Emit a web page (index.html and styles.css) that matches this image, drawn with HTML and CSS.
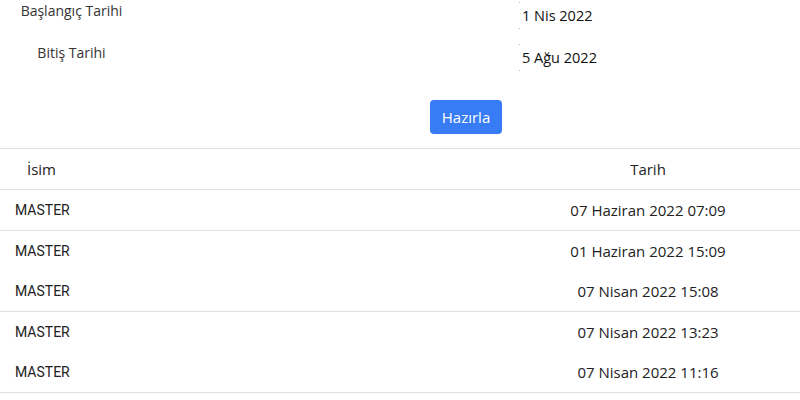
FILE: index.html
```html
<!DOCTYPE html>
<html lang="tr">
<head>
<meta charset="utf-8">
<link rel="stylesheet" href="styles.css">
</head>
<body>
<div class="form">
  <div class="field">
    <div class="label">Başlangıç Tarihi</div>
    <div class="value">1 Nis 2022</div>
  </div>
  <div class="field">
    <div class="label">Bitiş Tarihi</div>
    <div class="value">5 Ağu 2022</div>
  </div>
</div>
<div class="actions"><button class="btn">Hazırla</button></div>
<table class="grid">
  <thead>
    <tr><th class="c-name">İsim</th><th class="c-date">Tarih</th></tr>
  </thead>
  <tbody>
    <tr class="line"><td class="c-name">MASTER</td><td class="c-date">07 Haziran 2022 07:09</td></tr>
    <tr><td class="c-name">MASTER</td><td class="c-date">01 Haziran 2022 15:09</td></tr>
    <tr class="line"><td class="c-name">MASTER</td><td class="c-date">07 Nisan 2022 15:08</td></tr>
    <tr><td class="c-name">MASTER</td><td class="c-date">07 Nisan 2022 13:23</td></tr>
    <tr class="line"><td class="c-name">MASTER</td><td class="c-date">07 Nisan 2022 11:16</td></tr>
  </tbody>
</table>
</body>
</html>
```
FILE: styles.css
```css
html, body { margin: 0; padding: 0; background: #fff; }
body { font-family: "Open Sans", "Noto Sans", sans-serif; color: #212529; width: 800px; }
.form { display: flex; flex-direction: column; }
.field { display: flex; height: 42px; align-items: flex-start; }
.label { flex: 0 0 143px; text-align: center; font-size: 14px; line-height: 22px; color: #333; }
.value { position: relative; margin-left: 376px; margin-top: 2px; height: 27px; line-height: 28px; padding-left: 3px; font-size: 14.5px; color: #111; }
.value::before, .value::after { content: ""; position: absolute; left: 0; width: 1px; height: 1px; background: #bbb; }
.value::before { top: 0; }
.value::after { bottom: 0; }
.actions { display: flex; margin-top: 16px; padding-left: 430px; }
.btn { width: 72px; height: 34px; border: 0; border-radius: 4px; background: #377cf5; color: #fff; font-family: inherit; font-size: 15px; padding: 0; }
.grid { margin-top: 14px; width: 800px; border-collapse: collapse; table-layout: fixed; }
.grid th, .grid td { height: 40px; padding: 0; font-weight: normal; }
.grid thead tr { border-top: 1px solid #dee2e6; border-bottom: 1px solid #dee2e6; }
.grid th { font-size: 15px; font-weight: 500; color: #222; }
.grid tr.line { border-bottom: 1px solid #dee2e6; }
.c-name { text-align: left; }
th.c-name { width: 469px; padding-left: 27px; }
td.c-name { padding-left: 15px; font-family: Roboto, sans-serif; font-size: 14px; color: #222; }
.c-date { text-align: center; font-size: 15px; color: #222; }
```
